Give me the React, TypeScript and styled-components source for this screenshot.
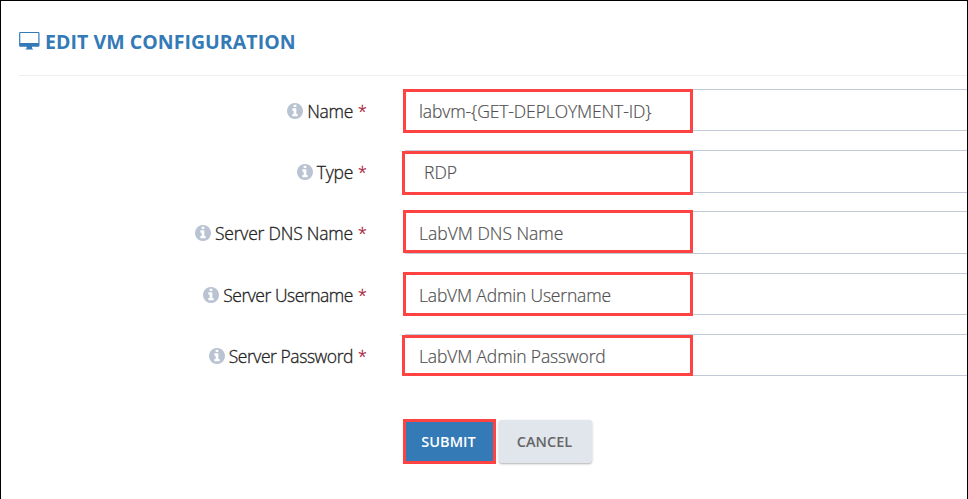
import React from "react";
import styled, { createGlobalStyle } from "styled-components";

const GlobalStyle = createGlobalStyle`
  *, *::before, *::after { box-sizing: border-box; }
  html, body { margin: 0; padding: 0; background: #fff; overflow: hidden; }
  body { font-family: "Open Sans", "Noto Sans", sans-serif; }
`;

const Page = styled.main`
  height: 499px;
  border: 1px solid #000;
  border-bottom: 0;
  padding-left: 18px;
  overflow: hidden;
`;

const Header = styled.header`
  display: flex;
  align-items: center;
  height: 75px;
  padding-top: 6px;
  border-bottom: 1px solid #eee;
  color: #337ab7;
`;

const Title = styled.h1`
  margin: 2px 0 0 5px;
  font-size: 19.5px;
  line-height: 28px;
  font-weight: 700;
  letter-spacing: 0.05px;
  white-space: nowrap;
`;

const Form = styled.form`
  display: grid;
  padding-top: 13px;
`;

const Row = styled.div<{ $gap: number }>`
  display: grid;
  grid-template-columns: 347px 1fr;
  column-gap: 37px;
  margin-bottom: ${(p) => p.$gap}px;
`;

const Label = styled.label<{ $spacing: number }>`
  display: flex;
  align-items: center;
  justify-content: flex-end;
  height: 44px;
  color: #222;
  font-size: 17.5px;
  font-weight: 300;
  -webkit-text-stroke: 0.3px currentColor;
  white-space: nowrap;

  svg { flex: none; margin: 0 4px 0 0; }
  span { letter-spacing: ${(p) => p.$spacing}px; }
`;

const Required = styled.i`
  width: 8px;
  margin-left: 5px;
  color: #a81c3c;
  font-style: normal;
  font-size: 16px;
`;

const Field = styled.div<{ $height: number; $indent: number; $spacing: number }>`
  position: relative;
  display: flex;
  align-items: center;
  height: ${(p) => p.$height}px;
  padding: 1px 0 0 ${(p) => p.$indent}px;
  border: 1px solid #c2cad8;
  border-right: 0;
  border-radius: 4px 0 0 4px;
  color: #505050;
  font-size: 17.5px;
  font-weight: 300;
  -webkit-text-stroke: 0.2px currentColor;
  letter-spacing: ${(p) => p.$spacing}px;
  white-space: nowrap;
`;

const Highlight = styled.div<{ $top: number; $left: number; $height: number }>`
  position: absolute;
  top: ${(p) => p.$top - 1}px;
  left: ${(p) => p.$left - 1}px;
  right: 274px;
  height: ${(p) => p.$height}px;
  border: 3px solid #ff4343;
`;

const Actions = styled.div`
  display: flex;
  align-items: flex-start;
  gap: 3px;
  padding-left: 384px;
`;

const Button = styled.button<{ $primary?: boolean }>`
  width: 93px;
  height: ${(p) => (p.$primary ? 45 : 43)}px;
  margin-top: ${(p) => (p.$primary ? 0 : 1)}px;
  padding: 0 2px 0 0;
  border: ${(p) => (p.$primary ? "3px solid #ff4343" : "0")};
  border-radius: ${(p) => (p.$primary ? 0 : 3)}px;
  background: ${(p) => (p.$primary ? "#337ab7" : "#e1e5ec")};
  color: ${(p) => (p.$primary ? "#fff" : "#666")};
  box-shadow: ${(p) => (p.$primary ? "none" : "0 1px 3px rgba(0, 0, 0, 0.2), 0 1px 1px rgba(0, 0, 0, 0.12)")};
  font: 600 14.5px "Open Sans", sans-serif;
`;

const Monitor = () => (
  <svg width="21" height="19" viewBox="0 0 21 19" fill="currentColor">
    <path fillRule="evenodd" d="M1.4 0H19.2Q20.5 0 20.5 1.3V13.5Q20.5 14.8 19.2 14.8H13V16.5Q14.2 16.5 14.2 17.5H6.5Q6.5 16.5 7.7 16.5V14.8H1.4Q.1 14.8 .1 13.5V1.3Q.1 0 1.4 0ZM1.3 1.1V11H19.3V1.1Z" />
  </svg>
);

const Info = () => (
  <svg width="16" height="16" viewBox="0 0 1536 1536" fill="#b9c3d2" stroke="none">
    <path d="M1024 1248v-160q0-14-9-23t-23-9h-96V544q0-14-9-23t-23-9H544q-14 0-23 9t-9 23v160q0 14 9 23t23 9h96v320h-96q-14 0-23 9t-9 23v160q0 14 9 23t23 9h448q14 0 23-9t9-23zM896 352V192q0-14-9-23t-23-9H672q-14 0-23 9t-9 23v160q0 14 9 23t23 9h192q14 0 23-9t9-23zm640 416q0 209-103 385.500T1153.500 1433 768 1536t-385.500-103T103 1153.500 0 768t103-385.500T382.500 103 768 0t385.500 103T1433 382.500 1536 768z" />
  </svg>
);

const fields = [
  { label: "Name", value: "labvm-{GET-DEPLOYMENT-ID}", ls: -0.3, vs: -0.11, indent: 15, height: 42, gap: 17, mark: [0, 0, 44] },
  { label: "Type", value: "RDP", ls: -0.25, vs: 0, indent: 20, height: 43, gap: 17, mark: [1, -1, 44] },
  { label: "Server DNS Name", value: "LabVM DNS Name", ls: -0.2, vs: 0, indent: 15, height: 43, gap: 18, mark: [-1, 0, 43] },
  { label: "Server Username", value: "LabVM Admin Username", ls: -0.47, vs: -0.18, indent: 15, height: 42, gap: 17, mark: [-1, 0, 44] },
  { label: "Server Password", value: "LabVM Admin Password", ls: -0.44, vs: -0.15, indent: 15, height: 42, gap: 41, mark: [1, -1, 41] },
];

export default function App() {
  return (
    <>
      <GlobalStyle />
      <Page>
        <Header>
          <Monitor />
          <Title>EDIT VM CONFIGURATION</Title>
        </Header>
        <Form>
          {fields.map((f) => (
            <Row key={f.label} $gap={f.gap}>
              <Label $spacing={f.ls}>
                <Info />
                <span>{f.label}</span>
                <Required>*</Required>
              </Label>
              <Field $height={f.height} $indent={f.indent} $spacing={f.vs}>
                {f.value}
                <Highlight $top={f.mark[0]} $left={f.mark[1]} $height={f.mark[2]} />
              </Field>
            </Row>
          ))}
          <Actions>
            <Button type="button" $primary>SUBMIT</Button>
            <Button type="button">CANCEL</Button>
          </Actions>
        </Form>
      </Page>
    </>
  );
}
